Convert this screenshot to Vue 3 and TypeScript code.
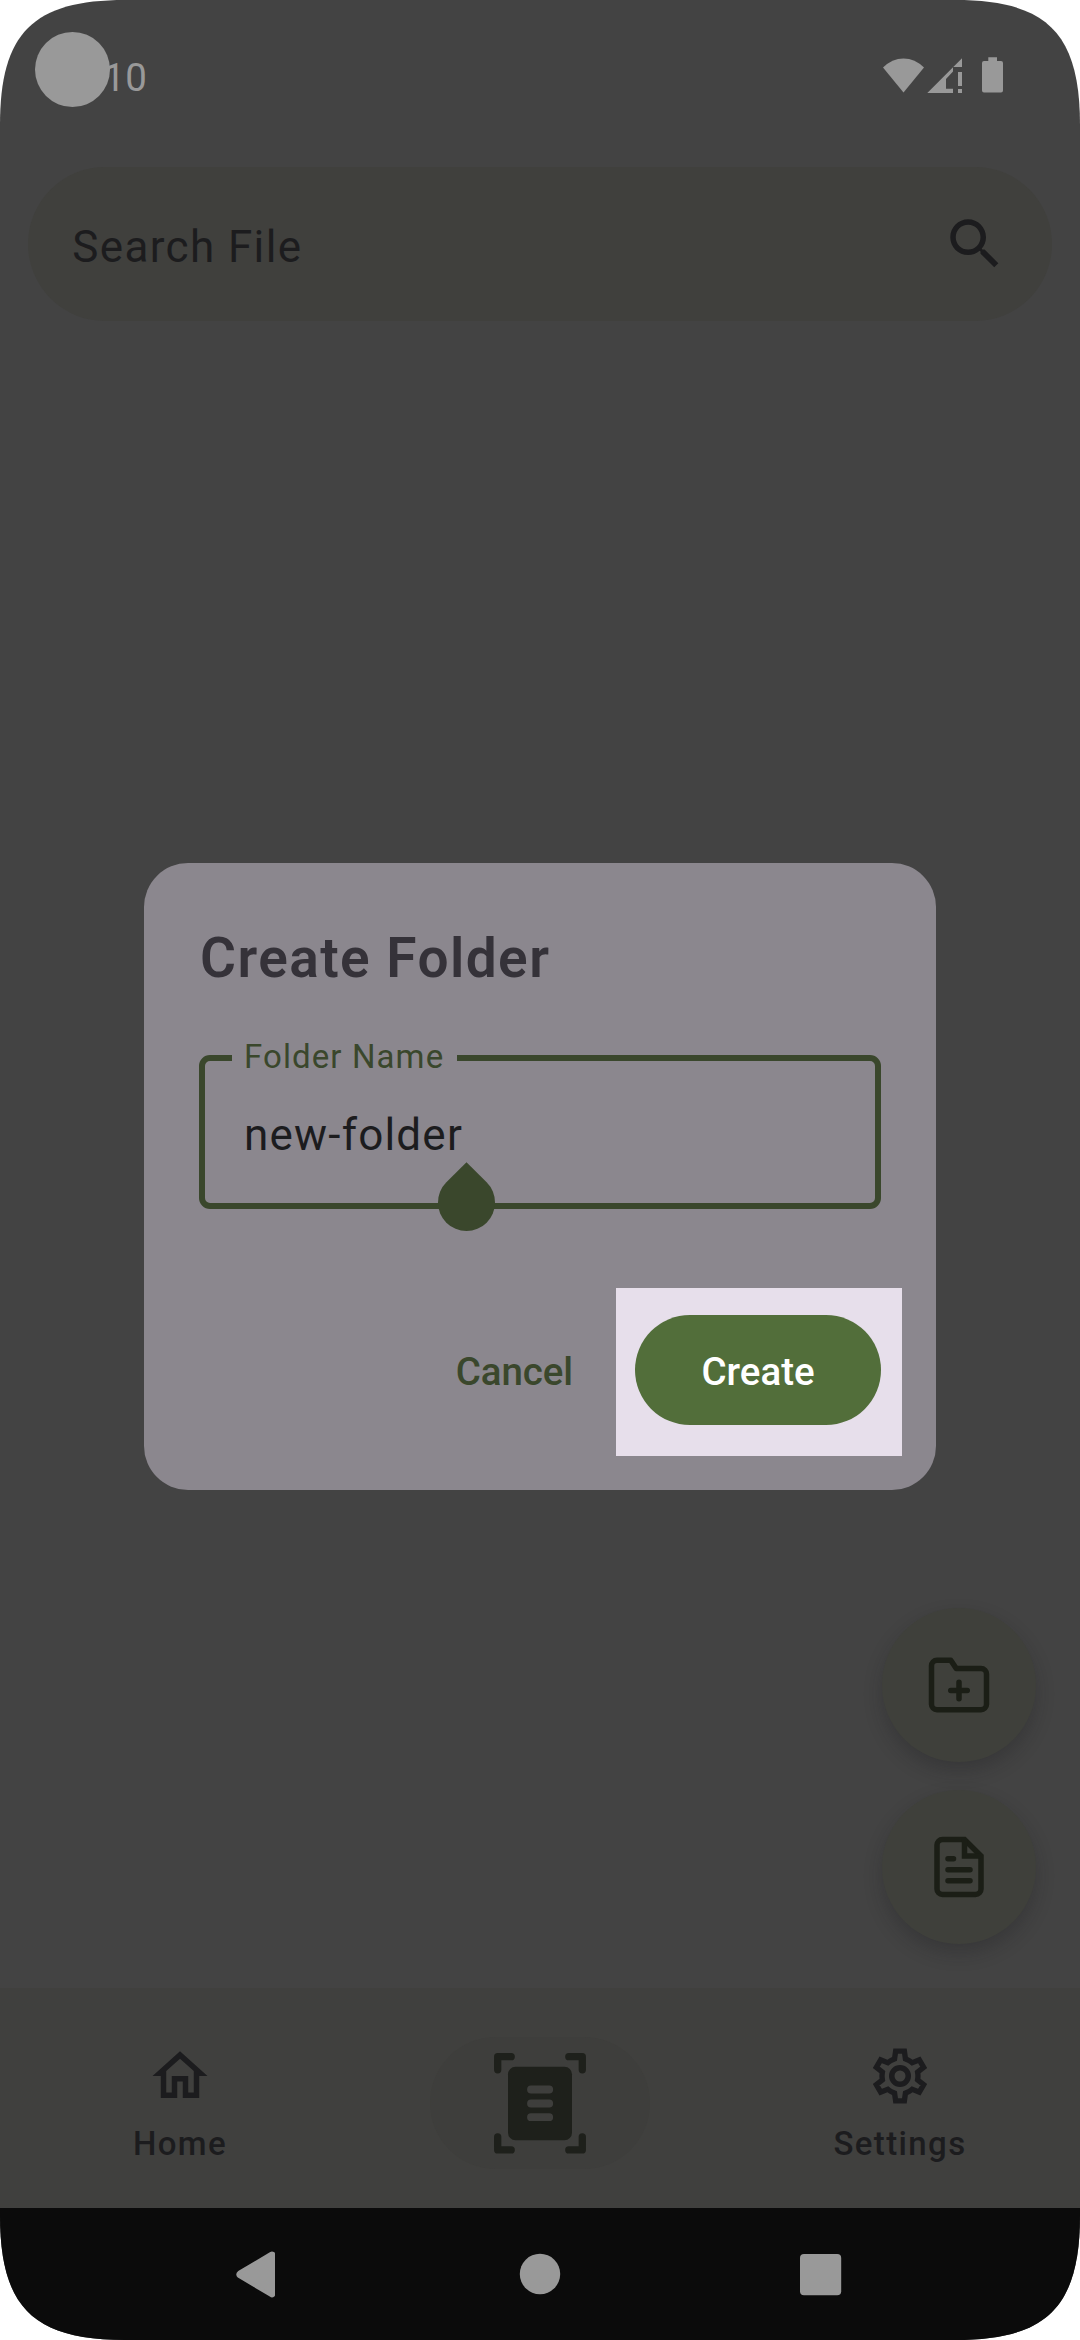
<script setup lang="ts">
import { ref } from 'vue'

const searchHint = ref('Search File')
const folderName = ref('new-folder')
const gearOutline =
  'M14.43 2H9.57L9.13 5.07Q8.2 5.45 7.43 6.06L4.56 4.89 2.12 9.11 4.56 11.03Q4.42 12 4.56 12.97L2.12 14.89 4.56 19.11 7.43 17.94Q8.2 18.55 9.13 18.93L9.57 22H14.43L14.87 18.93Q15.8 18.55 16.57 17.94L19.44 19.11 21.88 14.89 19.44 12.97Q19.58 12 19.44 11.03L21.88 9.11 19.44 4.89 16.57 6.06Q15.8 5.45 14.87 5.07Z'
</script>

<template>
  <div class="screen">
    <header class="status">
      <span class="camera"></span>
      <span class="clock">10</span>
      <svg class="status-icons" width="122" height="40" viewBox="882 55 122 40">
        <path d="M883 67.5Q892 58.4 903.5 58.4T924 67.5L903.5 92.5Z" />
        <path d="M927.3 93L962 58.3V67H953V71.5L946 79V88.7H953V93Z" />
        <path d="M958 72h4v14h-4zM958 89h4v4h-4z" />
        <path d="M988.3 57.2h8.7v3.8h4a2 2 0 0 1 2 2v27.6a2 2 0 0 1-2 2h-17a2 2 0 0 1-2-2V63a2 2 0 0 1 2-2h4.300z" />
      </svg>
    </header>

    <div class="search">
      <span>{{ searchHint }}</span>
      <svg width="66" height="66" viewBox="0 0 24 24" fill="currentColor">
        <path d="M15.5 14h-.79l-.28-.27C15.41 12.59 16 11.11 16 9.500 16 5.910 13.090 3 9.500 3S3 5.910 3 9.500 5.910 16 9.500 16c1.610 0 3.090-.59 4.230-1.570l.27.28v.79l5 4.990L20.490 19l-4.990-5zm-6 0C7.010 14 5 11.990 5 9.500S7.010 5 9.500 5 14 7.010 14 9.500 11.990 14 9.500 14z" />
      </svg>
    </div>

    <main class="content">
      <button class="fab">
        <svg width="66" height="66" viewBox="0 0 24 24" class="line-icon">
          <path stroke-linejoin="round" d="M22 19a2 2 0 0 1-2 2H4a2 2 0 0 1-2-2V5a2 2 0 0 1 2-2h5l2 3h9a2 2 0 0 1 2 2z" />
          <path stroke-linecap="round" d="M12 11v6M9 14h6" />
        </svg>
      </button>
      <button class="fab">
        <svg width="66" height="66" viewBox="0 0 24 24" class="line-icon">
          <path d="M14 2H6a2 2 0 0 0-2 2v16a2 2 0 0 0 2 2h12a2 2 0 0 0 2-2V8z" />
          <path d="M14 2v6h6" />
          <path stroke-linecap="round" d="M8 9h2M8 13h8M8 17h8" />
        </svg>
      </button>
    </main>

    <nav class="tabs">
      <div class="tab">
        <svg width="66" height="66" viewBox="0 0 24 24" fill="currentColor">
          <path d="M12 5.690l5 4.500V18h-2v-6H9v6H7v-7.810l5-4.500M12 3L2 12h3v8h6v-6h2v6h6v-8h3L12 3z" />
        </svg>
        <span>Home</span>
      </div>
      <div class="tab">
        <div class="scan">
          <svg width="92" height="101" viewBox="494 2052.500 92 101">
            <rect x="508" y="2066.300" width="64" height="73.400" rx="7.500" fill="#1e201b" />
            <path
              fill="none" stroke="#1e201b" stroke-width="7.300" stroke-linecap="round" stroke-linejoin="round"
              d="M511.200 2056.200H497.700V2069.300M568.800 2056.200H582.300V2069.300M511.200 2149.400H497.700V2136.300M568.800 2149.400H582.300V2136.300"
            />
            <path fill="none" stroke="#3e3e3c" stroke-width="7.800" stroke-linecap="round" d="M531 2089h18.200M531 2103h18.200M531 2116.700h18.200" />
          </svg>
        </div>
      </div>
      <div class="tab">
        <svg width="66" height="66" viewBox="0 0 24 24" fill="none" stroke="currentColor">
          <clipPath id="gear"><path :d="gearOutline" /></clipPath>
          <path :d="gearOutline" stroke-width="3.900" clip-path="url(#gear)" />
          <circle cx="12" cy="12" r="3" stroke-width="2" />
        </svg>
        <span>Settings</span>
      </div>
    </nav>

    <footer class="system">
      <svg width="1080" height="132" viewBox="0 0 1080 132" fill="#999">
        <path d="M239 64.300L271 45.300Q272 44.500 273.500 45.500V87.300Q272 88.300 271 87.500L239 68.500Q236.500 66.400 239 64.300Z" stroke="#999" stroke-width="3" stroke-linejoin="round" />
        <circle cx="540" cy="66" r="20.200" />
        <rect x="800" y="46" width="41.200" height="41.200" rx="4" />
      </svg>
    </footer>

    <section class="dialog">
      <h1>Create Folder</h1>
      <div class="field">
        <span class="label">Folder Name</span>
        <span class="value">{{ folderName }}</span>
        <i class="handle"></i>
      </div>
      <div class="actions">
        <button class="cancel">Cancel</button>
        <div class="spotlight">
          <button class="create">Create</button>
        </div>
      </div>
    </section>
  </div>
</template>

<style>
body {
  margin: 0;
  background: #fff;
}
</style>

<style scoped>
.screen {
  position: relative;
  display: flex;
  flex-direction: column;
  width: 1080px;
  height: 2340px;
  overflow: hidden;
  background: #434343;
  color: #1c1c1e;
  font-family: Roboto, sans-serif;
  clip-path: path('M0 125C0 33 33 0 125 0H955C1047 0 1080 33 1080 125V2215C1080 2307 1047 2340 955 2340H125C33 2340 0 2307 0 2215Z');
}
button {
  border: 0;
  padding: 0;
  background: none;
  font: inherit;
  color: inherit;
}
svg {
  display: block;
  flex: none;
}
.status {
  display: flex;
  box-sizing: border-box;
  height: 167px;
  padding: 32px 76px 0 35px;
  color: #999;
}
.camera {
  width: 75px;
  height: 75px;
  border-radius: 50%;
  background: #999;
}
.clock {
  margin: 23px auto 0 -6.500px;
  font-size: 38.500px;
  line-height: 46px;
}
.status-icons {
  margin-top: 23px;
  fill: #999;
}
.search {
  display: flex;
  justify-content: space-between;
  box-sizing: border-box;
  height: 154px;
  margin: 0 28px;
  padding: 43.800px 44.200px 0;
  border-radius: 77px;
  background: #40403d;
  font-size: 44px;
  line-height: 66px;
  letter-spacing: 1.375px;
}
.search span {
  padding-top: 3px;
}
.content {
  flex: 1;
  display: flex;
  flex-direction: column;
  align-items: flex-end;
  justify-content: flex-end;
  gap: 28px;
  padding: 0 44px 44px;
}
.fab {
  display: flex;
  align-items: center;
  justify-content: center;
  width: 154px;
  height: 154px;
  border-radius: 50%;
  background: #3f403b;
  box-shadow: 0 9px 18px rgba(25, 25, 28, 0.25);
}
.line-icon {
  fill: none;
  stroke: #1b1e16;
  stroke-width: 2;
}
.tabs {
  display: flex;
  height: 220px;
  background: #40403e;
}
.tab {
  flex: 1;
  display: flex;
  flex-direction: column;
  align-items: center;
  padding-top: 55px;
  font-size: 33px;
  font-weight: 500;
  line-height: 44px;
  letter-spacing: 1.375px;
}
.tab span {
  margin-top: 13px;
}
.scan {
  display: flex;
  align-items: center;
  justify-content: center;
  width: 220px;
  height: 132px;
  margin-top: -6px;
  border-radius: 66px;
  background: #3e3e3c;
}
.system {
  height: 132px;
  background: #0b0b0b;
}
.dialog {
  position: absolute;
  left: 144px;
  top: 863px;
  display: flex;
  flex-direction: column;
  box-sizing: border-box;
  width: 792px;
  height: 627px;
  padding: 62px 34px 34px 55px;
  border-radius: 44px;
  background: #8b878e;
}
h1 {
  margin: 0 0 0 1px;
  color: #353239;
  font-size: 55px;
  font-weight: 600;
  line-height: 66px;
  letter-spacing: 1.450px;
}
.field {
  position: relative;
  box-sizing: border-box;
  width: 682px;
  height: 154px;
  margin-top: 64px;
  padding: 41px 39px;
  border: 6px solid #3a472c;
  border-radius: 11px;
  font-size: 44px;
  line-height: 66px;
  letter-spacing: 1.200px;
}
.label {
  position: absolute;
  left: 27px;
  top: -26px;
  box-sizing: border-box;
  width: 225px;
  padding-left: 12px;
  background: #8b878e;
  color: #3a472c;
  font-size: 33px;
  line-height: 44px;
  letter-spacing: 1.100px;
}
.handle {
  position: absolute;
  left: 233px;
  top: 112.500px;
  width: 57px;
  height: 57px;
  border-radius: 0 50% 50% 50%;
  background: #3a472c;
  transform: rotate(45deg);
}
.actions {
  display: flex;
  align-items: flex-start;
  justify-content: flex-end;
  margin-top: auto;
  font-size: 38.500px;
  font-weight: 500;
}
.cancel,
.create {
  height: 110px;
  padding-top: 2px;
}
.cancel {
  margin: 27px 43px 0 0;
  color: #3a472c;
  letter-spacing: -0.100px;
}
.spotlight {
  box-sizing: border-box;
  width: 286px;
  height: 168px;
  padding: 27px 21px 31px 19px;
  background: #e7dfeb;
}
.create {
  width: 246px;
  border-radius: 55px;
  background: #526e3a;
  color: #fff;
}
</style>
